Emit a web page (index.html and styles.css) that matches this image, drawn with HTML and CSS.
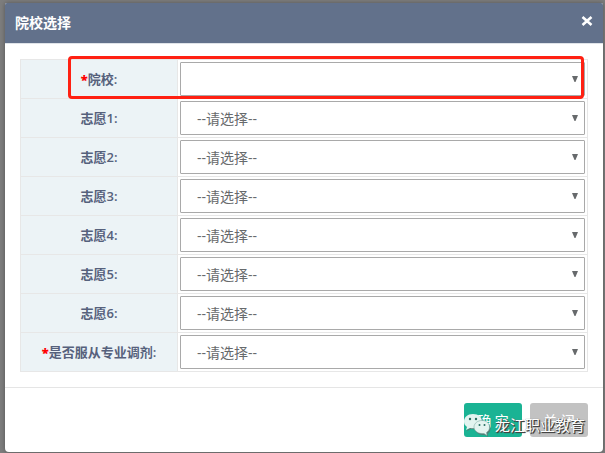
FILE: index.html
```html
<!DOCTYPE html>
<html lang="zh-CN">
<head>
<meta charset="utf-8">
<title>院校选择</title>
<link rel="stylesheet" href="styles.css">
</head>
<body>
<main class="modal">
  <header class="modal-header">
    <h1>院校选择</h1>
    <svg class="close" viewBox="0 0 12 12"><path d="M1.500 2L10.500 10M10.500 2L1.500 10"/></svg>
  </header>
  <div class="modal-body">
    <div class="form">
      <div class="row"><div class="label"><span class="label-text"><b>*</b>院校:</span></div><div class="field"><div class="select"><span></span><i></i></div></div></div>
      <div class="row"><div class="label"><span class="label-text">志愿1:</span></div><div class="field"><div class="select"><span>--请选择--</span><i></i></div></div></div>
      <div class="row"><div class="label"><span class="label-text">志愿2:</span></div><div class="field"><div class="select"><span>--请选择--</span><i></i></div></div></div>
      <div class="row"><div class="label"><span class="label-text">志愿3:</span></div><div class="field"><div class="select"><span>--请选择--</span><i></i></div></div></div>
      <div class="row"><div class="label"><span class="label-text">志愿4:</span></div><div class="field"><div class="select"><span>--请选择--</span><i></i></div></div></div>
      <div class="row"><div class="label"><span class="label-text">志愿5:</span></div><div class="field"><div class="select"><span>--请选择--</span><i></i></div></div></div>
      <div class="row"><div class="label"><span class="label-text">志愿6:</span></div><div class="field"><div class="select"><span>--请选择--</span><i></i></div></div></div>
      <div class="row"><div class="label"><span class="label-text"><b>*</b>是否服从专业调剂:</span></div><div class="field"><div class="select"><span>--请选择--</span><i></i></div></div></div>
      <div class="highlight"></div>
    </div>
  </div>
  <footer class="modal-footer">
    <div class="btn primary">确 定</div>
    <div class="btn muted">关 闭</div>
    <div class="watermark">
      <svg viewBox="0 0 28 24">
        <g class="shade" transform="translate(1 1)"><path d="M10 1C4.500 1 1 4.500 1 8.500c0 2.500 1 4 3 5.500L3 17l4-2c7 1.500 12-2 12-6.500S15.500 1 10 1z"/><path d="M19 8c-4.500 0-8 3-8 6.500s3.500 6.500 8 6.500l2 0 3 2-.5-3c2-1.500 3-3 3-5.500C26.500 11 23.500 8 19 8z"/></g>
        <path class="bubble" d="M10 1C4.500 1 1 4.500 1 8.500c0 2.500 1 4 3 5.500L3 17l4-2c7 1.500 12-2 12-6.500S15.500 1 10 1z"/>
        <path class="bubble edge" d="M19 7.500c-4.500 0-8 3-8 6.500s3.500 6.500 8 6.500l2 0 3 2-.5-3c2-1.500 3-3 3-5.500C26.500 10.500 23.500 7.500 19 7.500z"/>
        <g class="eyes"><circle cx="7" cy="6" r="1.200"/><circle cx="13" cy="6" r="1.200"/><circle cx="16.500" cy="12" r="1"/><circle cx="21.500" cy="12" r="1"/></g>
      </svg>
      <span>龙江职业教育</span>
    </div>
  </footer>
</main>
</body>
</html>
```
FILE: styles.css
```css
* { box-sizing: border-box; }
body {
  margin: 0;
  width: 605px;
  height: 453px;
  padding: 3px 2px 1px 5px;
  overflow: hidden;
  background: #7d7d7d;
  font: 13px/18px "Open Sans", "Noto Sans CJK SC", sans-serif;
  color: #676a6c;
}
.modal {
  display: flex;
  flex-direction: column;
  height: 449px;
  background: #fff;
  border-radius: 2px 2px 4px 4px;
  box-shadow: 0 0 4px #555;
}
.modal-header {
  display: flex;
  align-items: center;
  justify-content: space-between;
  height: 41px;
  padding: 0 10px;
  background: #62718b;
  border-bottom: 1px solid #dfe3e8;
  border-radius: 2px 2px 0 0;
}
h1 {
  margin: 0;
  font-size: 14px;
  line-height: 20px;
  font-weight: 700;
  color: #fff;
}
.close {
  width: 12px;
  height: 12px;
  margin-top: -4px;
  stroke: #fff;
  stroke-width: 2.6;
}
.modal-body {
  height: 343px;
  padding: 15px 15px 0;
}
.form {
  position: relative;
  border: 1px solid #e7e7e7;
  border-bottom: 0;
}
.row {
  display: grid;
  grid-template-columns: 157px 1fr;
  height: 39px;
  border-bottom: 1px solid #e7e7e7;
}
.label {
  display: flex;
  align-items: center;
  justify-content: center;
  background: #ecf3f6;
  border-right: 1px solid #e7e7e7;
  color: #56617c;
  font-weight: 600;
}
.label b { color: #f00; }
.field { padding: 2px; }
.select {
  display: flex;
  align-items: center;
  justify-content: space-between;
  height: 34px;
  padding: 2px 6px 0 16px;
  border: 1px solid #a9a9a9;
  border-radius: 1px;
  font-size: 14px;
}
.select i {
  width: 6px;
  height: 6px;
  margin-top: -2px;
  background: #676a6c;
  clip-path: polygon(0 0, 100% 0, 58% 100%, 42% 100%);
}
.highlight {
  position: absolute;
  left: 47px;
  top: -4px;
  width: 516px;
  height: 43px;
  border: 3px solid #ff2012;
  border-radius: 4px;
}
.modal-footer {
  position: relative;
  display: flex;
  flex: 1;
  justify-content: flex-end;
  gap: 8px;
  padding: 15px 15px 0 0;
  border-top: 1px solid #e5e5e5;
}
.btn {
  width: 58px;
  height: 34px;
  border-radius: 3px;
  color: #fff;
  font-size: 14px;
  line-height: 35px;
  text-align: center;
}
.primary { background: #1ab394; }
.muted { background: #c2c2c2; }
.watermark {
  position: absolute;
  left: 458px;
  top: 25px;
  display: flex;
  align-items: center;
}
.watermark svg { width: 28px; height: 24px; margin-right: 4px; }
.watermark span {
  font: 15px/20px "Noto Sans CJK SC", sans-serif;
  color: #fff;
  white-space: nowrap;
  text-shadow: 1px 1px 0 #444, 1px 1px 1px #333, 0 0 1px #777;
}
.shade { fill: #527e76; }
.bubble { fill: #e3f4f0; }
.edge { stroke: #6d9f96; stroke-width: .5; }
.eyes { fill: #286e61; }
```
